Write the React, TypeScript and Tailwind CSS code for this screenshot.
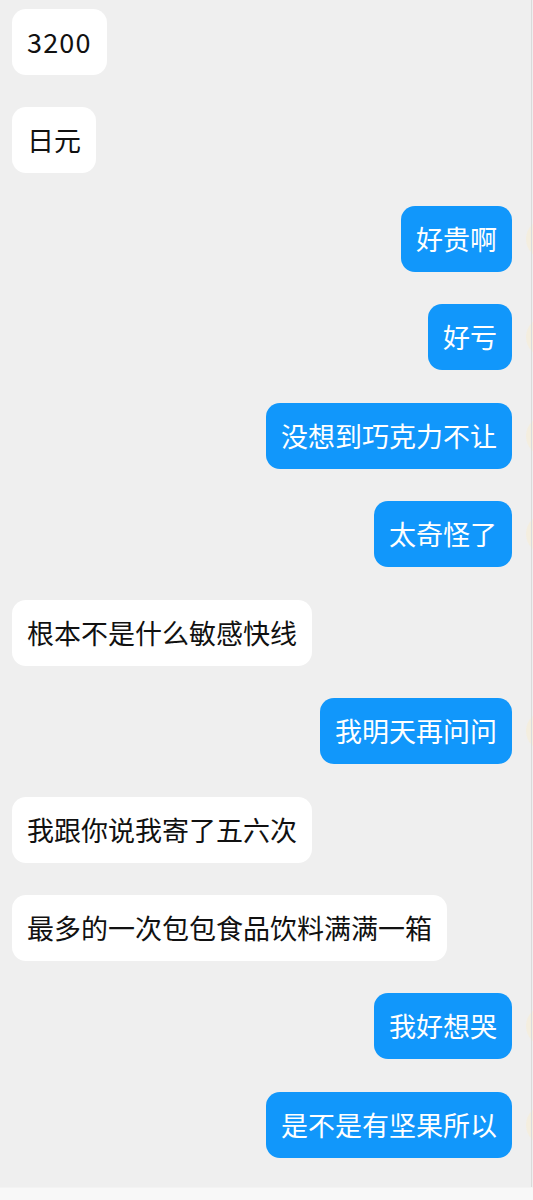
import React from 'react';

type Msg = { text: string; me?: boolean };

const messages: Msg[] = [
  { text: '3200' },
  { text: '日元' },
  { text: '好贵啊', me: true },
  { text: '好亏', me: true },
  { text: '没想到巧克力不让', me: true },
  { text: '太奇怪了', me: true },
  { text: '根本不是什么敏感快线' },
  { text: '我明天再问问', me: true },
  { text: '我跟你说我寄了五六次' },
  { text: '最多的一次包包食品饮料满满一箱' },
  { text: '我好想哭', me: true },
  { text: '是不是有坚果所以', me: true },
];

const App = () => {
  return (
    <div
      className="relative h-[1200px] w-[533px] overflow-hidden bg-[#efefef]"
      style={{ fontFamily: '"Noto Sans CJK SC", "Noto Sans", sans-serif' }}
    >
      <div className="flex flex-col gap-[32.45px] pt-[9px]">
        {messages.map((m, i) =>
          m.me ? (
            <div key={i} className="flex items-center justify-end">
              <div className="rounded-[14px] bg-[#1197fb] px-[15px] py-[15px] text-[27px] leading-[36px] text-white">
                {m.text}
              </div>
              <div className="ml-[14px] mr-[-33px] h-[40px] w-[40px] shrink-0 rounded-full bg-[#f4eedf]" />
            </div>
          ) : (
            <div key={i} className="flex items-center justify-start pl-[12px]">
              <div
                className={`rounded-[14px] bg-white px-[15px] py-[15px] text-[27px] leading-[36px] text-[#111] ${
                  /^\d+$/.test(m.text) ? 'tracking-[1.2px]' : ''
                }`}
              >
                {m.text}
              </div>
            </div>
          )
        )}
      </div>

      {/* right edge line */}
      <div className="absolute right-[1px] top-0 h-full w-px bg-[#dadada]" />

      {/* bottom input bar edge */}
      <div className="absolute bottom-0 left-0 h-[13px] w-full border-t border-[#f3f3f3] bg-[#f8f8f8]" />
    </div>
  );
};

export default App;
